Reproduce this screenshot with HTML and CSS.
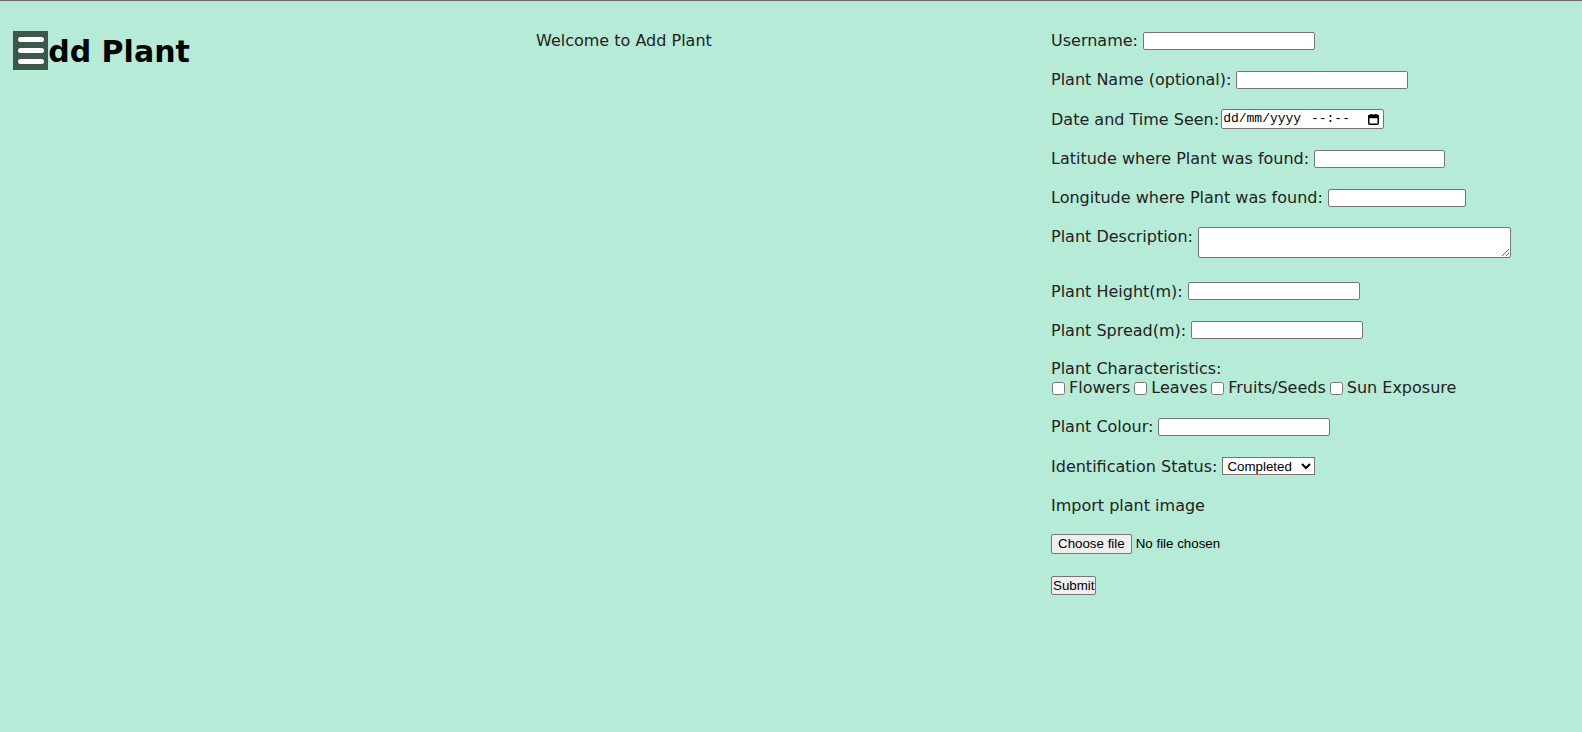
FILE: index.html
```html
<!DOCTYPE html>
<html lang="en">
<head>
<meta charset="utf-8">
<title>Add Plant</title>
<link rel="stylesheet" href="styles.css">
</head>
<body>
<div class="page">
  <button class="menu-toggle" type="button" aria-label="Open menu"><span></span><span></span><span></span></button>
  <h1 class="title">Add Plant</h1>
  <p class="welcome">Welcome to Add Plant</p>
  <form class="plant-form">
    <div class="field"><label for="username">Username:</label><input id="username" class="input w172" type="text"></div>
    <div class="field"><label for="plant-name">Plant Name (optional):</label><input id="plant-name" class="input w172" type="text"></div>
    <div class="field field-tight"><label>Date and Time Seen:</label><div class="date-input"><span class="date-text">dd/mm/yyyy --:--</span><svg class="cal-icon" width="11" height="11" viewBox="0 0 11 11" aria-hidden="true"><rect x="0.75" y="1.25" width="9.5" height="9" rx="1" fill="none" stroke="#000" stroke-width="1.5"/><rect x="0.75" y="1.25" width="9.5" height="3" fill="#000"/><rect x="2.5" y="0" width="1.5" height="2" fill="#000"/><rect x="7" y="0" width="1.5" height="2" fill="#000"/></svg></div></div>
    <div class="field"><label for="lat">Latitude where Plant was found:</label><input id="lat" class="input w131" type="text"></div>
    <div class="field"><label for="lng">Longitude where Plant was found:</label><input id="lng" class="input w138" type="text"></div>
    <div class="field field-top"><label for="desc">Plant Description:</label><textarea id="desc" class="textarea"></textarea></div>
    <div class="field"><label for="height">Plant Height(m):</label><input id="height" class="input w172" type="text"></div>
    <div class="field"><label for="spread">Plant Spread(m):</label><input id="spread" class="input w172" type="text"></div>
    <div class="group">
      <div class="group-title">Plant Characteristics:</div>
      <div class="checks">
        <label class="check"><input type="checkbox" class="checkbox">Flowers</label>
        <label class="check"><input type="checkbox" class="checkbox">Leaves</label>
        <label class="check"><input type="checkbox" class="checkbox">Fruits/Seeds</label>
        <label class="check"><input type="checkbox" class="checkbox">Sun Exposure</label>
      </div>
    </div>
    <div class="field"><label for="colour">Plant Colour:</label><input id="colour" class="input w172" type="text"></div>
    <div class="field"><label for="status">Identification Status:</label><select id="status" class="select"><option>Completed</option><option>In Progress</option></select></div>
    <div class="field field-import"><span>Import plant image</span></div>
    <div class="field field-file"><label class="file-button" for="plant-image">Choose file</label><input id="plant-image" type="file" hidden><span class="file-name">No file chosen</span></div>
    <div class="actions"><button type="submit" class="submit">Submit</button></div>
  </form>
</div>
</body>
</html>
```
FILE: styles.css
```css
html {
  border-top: 1px solid #666;
  background: #b6ebd8;
}

body {
  margin: 0;
  font-family: "DejaVu Sans", sans-serif;
  font-size: 16px;
  color: #222;
}

.page {
  position: relative;
  display: grid;
  grid-template-columns: 528px 515px 1fr;
  align-items: start;
  padding-left: 8px;
}

.menu-toggle {
  position: absolute;
  left: 13px;
  top: 30px;
  width: 35px;
  height: 39px;
  margin: 0;
  padding: 6px 0 0 5px;
  border: 0;
  background: #3b584a;
  display: flex;
  flex-direction: column;
  gap: 6px;
  box-sizing: border-box;
}

.menu-toggle span {
  display: block;
  width: 26px;
  height: 5px;
  border-radius: 3px;
  background: #fff;
}

.title {
  margin: 32.9px 0 0 17px;
  font-size: 30px;
  font-weight: bold;
  line-height: normal;
  color: #000;
}

.welcome {
  margin: 29.7px 0 0;
  line-height: 19.5px;
}

.plant-form {
  margin-top: 30.2px;
}

.field {
  display: flex;
  align-items: center;
  gap: 5px;
  min-height: 19.5px;
  line-height: 19.5px;
  margin-bottom: 19.6px;
}

.field-tight {
  gap: 2px;
}

.field-top {
  align-items: flex-start;
  margin-bottom: 23.4px;
}

.input {
  box-sizing: border-box;
  height: 18px;
  margin: 0;
  padding: 1px 2px;
  border: 1px solid #767676;
  border-radius: 2px;
  background: #fff;
  font: 13.33px "Liberation Sans", Arial, sans-serif;
}

.w172 { width: 172px; }
.w131 { width: 131px; }
.w138 { width: 138px; }

.date-input {
  box-sizing: border-box;
  width: 163px;
  height: 20px;
  padding: 0 4px 0 1px;
  border: 1px solid #767676;
  border-radius: 2px;
  background: #fff;
  display: flex;
  align-items: center;
  justify-content: space-between;
}

.date-text {
  font: 13px "Liberation Mono", monospace;
  line-height: 18px;
  white-space: pre;
  word-spacing: 2px;
  color: #000;
}

.cal-icon {
  display: block;
}

.textarea {
  box-sizing: border-box;
  width: 313px;
  height: 31px;
  margin: 0;
  padding: 2px;
  border: 1px solid #767676;
  border-radius: 2px;
  background: #fff;
  font: 13.33px "Liberation Mono", monospace;
}

.group {
  margin-bottom: 19.6px;
}

.group-title {
  line-height: 18.6px;
}

.checks {
  display: flex;
  align-items: center;
  gap: 3px;
  height: 19.5px;
  line-height: 19.5px;
}

.check {
  display: flex;
  align-items: center;
}

.checkbox {
  width: 13px;
  height: 13px;
  margin: 0 4px 0 1px;
}

.select {
  box-sizing: border-box;
  width: 93px;
  height: 18px;
  margin: 0;
  font: 13.33px "Liberation Sans", Arial, sans-serif;
  color: #000;
  background: #fff;
  border: 1px solid #767676;
  border-radius: 0;
}

.field-import {
  margin-bottom: 18.8px;
}

.field-file {
  gap: 4px;
  margin-bottom: 21px;
}

.file-button {
  box-sizing: border-box;
  height: 20px;
  padding: 0 6px;
  border: 1px solid #767676;
  border-radius: 2px;
  background: #efefef;
  font: 13.33px "Liberation Sans", Arial, sans-serif;
  line-height: 18px;
  color: #000;
}

.file-name {
  font: 13.33px "Liberation Sans", Arial, sans-serif;
  color: #000;
}

.submit {
  box-sizing: border-box;
  height: 19px;
  margin: 0;
  padding: 0 1px;
  border: 1px solid #767676;
  border-radius: 2px;
  background: #efefef;
  font: 13.33px "Liberation Sans", Arial, sans-serif;
  color: #000;
}
```
